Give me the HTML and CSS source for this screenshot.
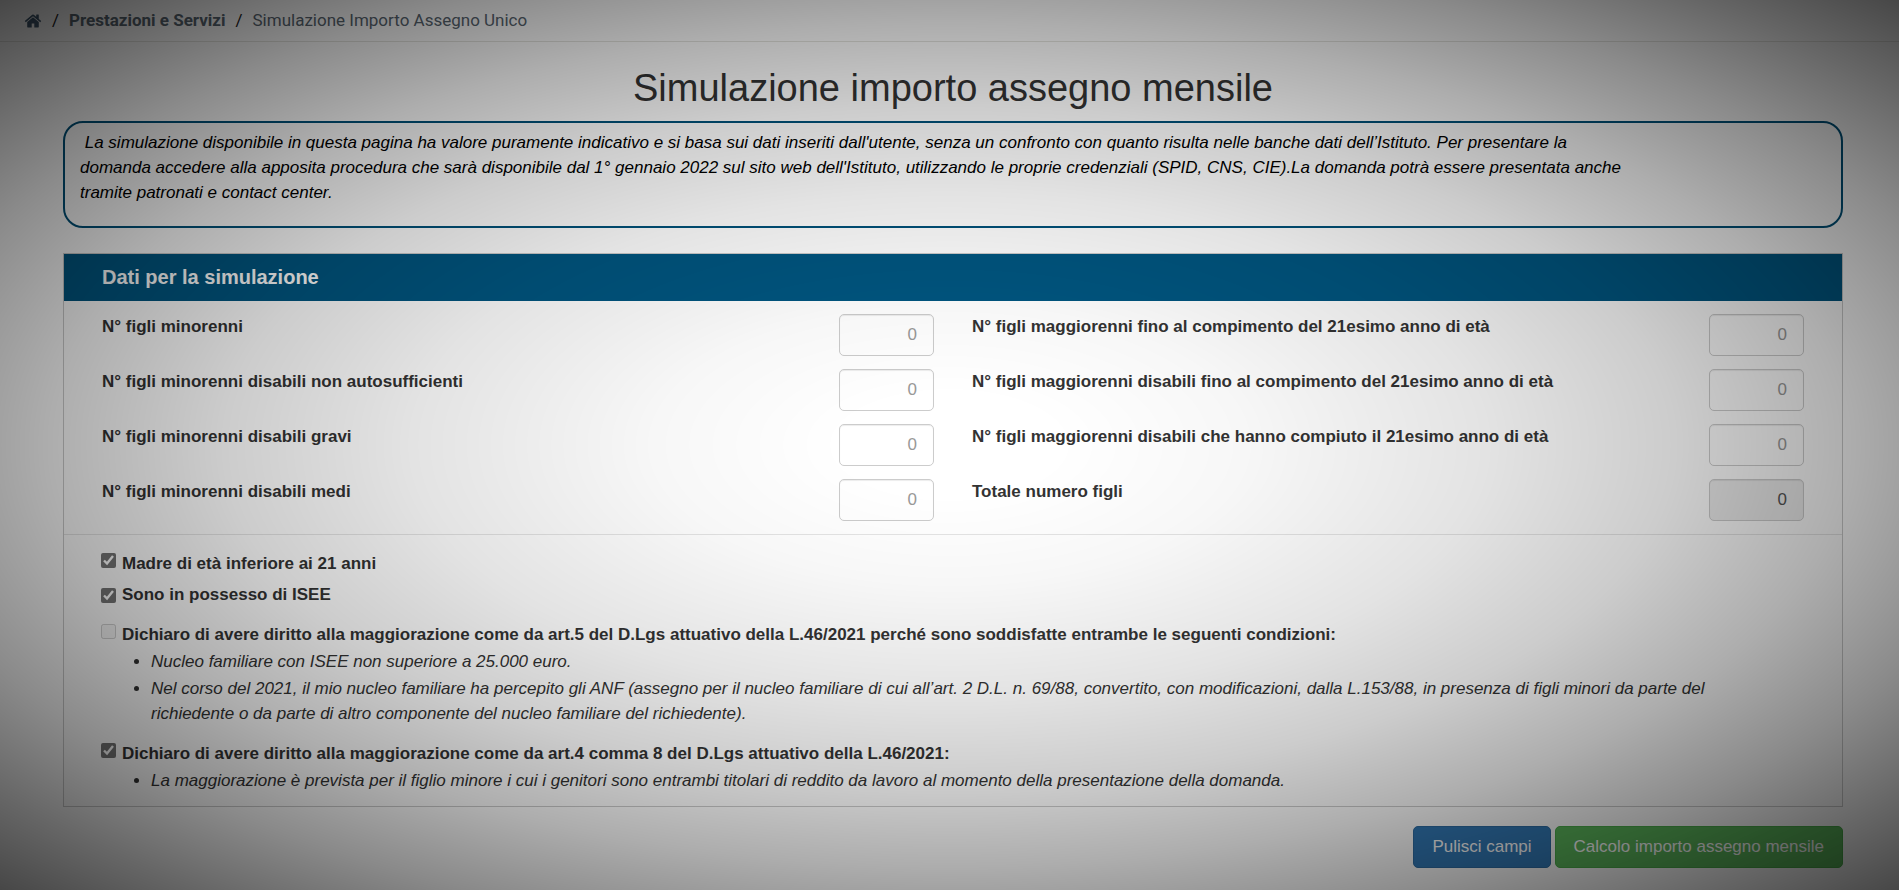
FILE: index.html
```
<!DOCTYPE html>
<html lang="it">
<head>
  <meta charset="UTF-8">
  <meta name="viewport" content="width=device-width, initial-scale=1.0">
  <title>Simulazione Importo Assegno Unico</title>
  <link rel="stylesheet" href="styles.css">
</head>
<body>
  <nav class="breadcrumb">
    <a href="#" class="home" aria-label="Home">
      <svg viewBox="0 0 1792 1792" width="18" height="18" fill="currentColor"><path d="M1472 992v480q0 26-19 45t-45 19h-384v-384h-256v384h-384q-26 0-45-19t-19-45v-480q0-1 .5-3t.5-3l575-474 575 474q1 2 1 6zm223-69l-62 74q-8 9-21 11h-3q-13 0-21-7l-692-577-692 577q-12 8-24 7-13-2-21-11l-62-74q-8-10-7-23.5t11-21.5l719-599q32-26 76-26t76 26l244 204v-195q0-14 9-23t23-9h192q14 0 23 9t9 23v408l219 182q10 8 11 21.5t-7 23.5z"/></svg>
    </a>
    <span class="sep">/</span>
    <a href="#" class="section">Prestazioni e Servizi</a>
    <span class="sep">/</span>
    <span class="current">Simulazione Importo Assegno Unico</span>
  </nav>

  <main class="container">
    <h1>Simulazione importo assegno mensile</h1>

    <div class="info">
      <p>&nbsp;La simulazione disponibile in questa pagina ha valore puramente indicativo e si basa sui dati inseriti dall'utente, senza un confronto con quanto risulta nelle banche dati dell’Istituto. Per presentare la domanda accedere alla apposita procedura che sarà disponibile dal 1° gennaio 2022 sul sito web dell'Istituto, utilizzando le proprie credenziali (SPID, CNS, CIE).La domanda potrà essere presentata anche tramite patronati e contact center.</p>
    </div>

    <form>
      <div class="panel">
        <h2>Dati per la simulazione</h2>

        <div class="figli">
          <div class="campo">
            <label for="minorenni">N° figli minorenni</label>
            <input type="text" id="minorenni" placeholder="0">
          </div>
          <div class="campo">
            <label for="maggiorenni">N° figli maggiorenni fino al compimento del 21esimo anno di età</label>
            <input type="text" id="maggiorenni" placeholder="0">
          </div>
          <div class="campo">
            <label for="nonauto">N° figli minorenni disabili non autosufficienti</label>
            <input type="text" id="nonauto" placeholder="0">
          </div>
          <div class="campo">
            <label for="maggdis">N° figli maggiorenni disabili fino al compimento del 21esimo anno di età</label>
            <input type="text" id="maggdis" placeholder="0">
          </div>
          <div class="campo">
            <label for="gravi">N° figli minorenni disabili gravi</label>
            <input type="text" id="gravi" placeholder="0">
          </div>
          <div class="campo">
            <label for="maggdis21">N° figli maggiorenni disabili che hanno compiuto il 21esimo anno di età</label>
            <input type="text" id="maggdis21" placeholder="0">
          </div>
          <div class="campo">
            <label for="medi">N° figli minorenni disabili medi</label>
            <input type="text" id="medi" placeholder="0">
          </div>
          <div class="campo">
            <label for="totale">Totale numero figli</label>
            <input type="text" id="totale" value="0" readonly>
          </div>
        </div>

        <div class="opzioni">
          <div class="check">
            <input type="checkbox" id="madre" checked>
            <label for="madre">Madre di età inferiore ai 21 anni</label>
          </div>
          <div class="check isee">
            <input type="checkbox" id="isee" checked>
            <label for="isee">Sono in possesso di ISEE</label>
          </div>
          <div class="check art">
            <input type="checkbox" id="art5" disabled>
            <label for="art5">Dichiaro di avere diritto alla maggiorazione come da art.5 del D.Lgs attuativo della L.46/2021 perché sono soddisfatte entrambe le seguenti condizioni:</label>
          </div>
          <ul>
            <li>Nucleo familiare con ISEE non superiore a 25.000 euro.</li>
            <li>Nel corso del 2021, il mio nucleo familiare ha percepito gli ANF (assegno per il nucleo familiare di cui all’art. 2 D.L. n. 69/88, convertito, con modificazioni, dalla L.153/88, in presenza di figli minori da parte del richiedente o da parte di altro componente del nucleo familiare del richiedente).</li>
          </ul>
          <div class="check art">
            <input type="checkbox" id="art4" checked>
            <label for="art4">Dichiaro di avere diritto alla maggiorazione come da art.4 comma 8 del D.Lgs attuativo della L.46/2021:</label>
          </div>
          <ul>
            <li>La maggiorazione è prevista per il figlio minore i cui i genitori sono entrambi titolari di reddito da lavoro al momento della presentazione della domanda.</li>
          </ul>
        </div>
      </div>

      <div class="buttons">
        <button type="reset" class="btn blue">Pulisci campi</button>
        <button type="button" class="btn green">Calcolo importo assegno mensile</button>
      </div>
    </form>
  </main>

  <div class="vignette"></div>
</body>
</html>
```

FILE: styles.css
```
* {
  box-sizing: border-box;
  margin: 0;
  padding: 0;
}
body {
  min-height: 100vh;
  background: #fff;
  color: #333;
  font-family: "Liberation Sans", Arial, sans-serif;
  font-size: 17px;
  line-height: 25px;
}

/* breadcrumb */
.breadcrumb {
  display: flex;
  align-items: center;
  gap: 10px;
  height: 42px;
  padding: 0 24px;
  border-bottom: 1px solid #e5e5e0;
  font-family: Roboto, sans-serif;
  color: #5a6772;
}
.breadcrumb a {
  color: #5a6772;
  text-decoration: none;
}
.breadcrumb .home {
  color: #435a70;
}
.breadcrumb .home svg {
  display: block;
}
.breadcrumb .section {
  font-weight: bold;
}
.breadcrumb .sep {
  color: #222;
}

.container {
  padding: 26px 56px 20px 63px;
}
h1 {
  margin-bottom: 13px;
  font-size: 38px;
  font-weight: normal;
  line-height: 40px;
  text-align: center;
}
.info {
  margin-bottom: 25px;
  padding: 7px 208px 21px 15px;
  border: 2px solid #00527a;
  border-radius: 20px;
  color: #000;
  font-style: italic;
}

/* form */
.panel {
  border: 1px solid #ccc;
}
.panel h2 {
  padding: 11px 38px;
  background: #005680;
  color: #fff;
  font-size: 20px;
  line-height: 25px;
}
.figli {
  display: grid;
  grid-template-columns: 1fr 1fr;
  gap: 13px 38px;
  padding: 13px 38px;
  border-bottom: 1px solid #e5e5e5;
}
.campo {
  display: flex;
  justify-content: space-between;
}
label {
  font-weight: bold;
}
.campo input {
  width: 95px;
  height: 42px;
  padding: 0 16px;
  border: 1px solid #ccc;
  border-radius: 5px;
  background: #fff;
  box-shadow: inset 0 1px 1px rgba(0, 0, 0, 0.075);
  color: #555;
  font-family: inherit;
  font-size: 17px;
  text-align: right;
}
.campo input::placeholder {
  color: #999;
}
.campo input[readonly] {
  background: #eee;
}
.opzioni {
  padding: 16px 37px 13px;
}
.check {
  display: flex;
  align-items: flex-start;
  gap: 6px;
}
.check input {
  flex: none;
  width: 15px;
  height: 15px;
  margin-top: 2px;
  accent-color: #767676;
}
.check.isee {
  align-items: center;
  margin-top: 6px;
}
.check.art {
  margin-top: 15px;
}
ul {
  padding: 0 32px 0 50px;
  font-style: italic;
}
li {
  margin-top: 2px;
}

.buttons {
  display: flex;
  justify-content: flex-end;
  gap: 4px;
  margin-top: 19px;
}
.btn {
  height: 42px;
  padding: 0 18px;
  border: 1px solid;
  border-radius: 5px;
  color: #fff;
  font-family: inherit;
  font-size: 17px;
}
.blue {
  background: #337ab7;
  border-color: #2e6da4;
}
.green {
  background: #5cb85c;
  border-color: #4cae4c;
}

/* dark edges over the whole page */
.vignette {
  position: fixed;
  inset: 0;
  pointer-events: none;
  background: radial-gradient(
    ellipse farthest-corner at center,
    rgba(0, 0, 0, 0) 8%,
    rgba(0, 0, 0, 0.03) 22%,
    rgba(0, 0, 0, 0.11) 40%,
    rgba(0, 0, 0, 0.2) 54%,
    rgba(0, 0, 0, 0.32) 67%,
    rgba(0, 0, 0, 0.46) 79%,
    rgba(0, 0, 0, 0.6) 90%,
    rgba(0, 0, 0, 0.72) 100%
  );
}
```
